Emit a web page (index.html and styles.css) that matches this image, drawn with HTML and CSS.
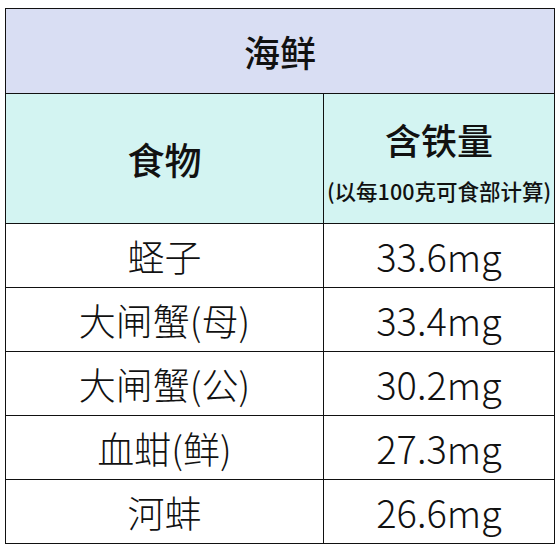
FILE: index.html
```html
<!DOCTYPE html>
<html lang="zh-CN">
<head>
<meta charset="utf-8">
<title>海鲜 含铁量</title>
<link rel="stylesheet" href="styles.css">
</head>
<body>
<table class="iron">
  <colgroup>
    <col class="c-food">
    <col class="c-iron">
  </colgroup>
  <thead>
    <tr class="title-row"><th colspan="2">海鲜</th></tr>
    <tr class="head-row">
      <th class="col-food">食物</th>
      <th class="col-iron"><div class="head-main">含铁量</div><div class="head-sub">(以每100克可食部计算)</div></th>
    </tr>
  </thead>
  <tbody>
    <tr><td>蛏子</td><td class="num">33.6mg</td></tr>
    <tr><td>大闸蟹(母)</td><td class="num">33.4mg</td></tr>
    <tr><td>大闸蟹(公)</td><td class="num">30.2mg</td></tr>
    <tr><td>血蚶(鲜)</td><td class="num">27.3mg</td></tr>
    <tr><td>河蚌</td><td class="num">26.6mg</td></tr>
  </tbody>
</table>
</body>
</html>
```
FILE: styles.css
```css
html, body {
  margin: 0;
  padding: 0;
  background: #ffffff;
}
body {
  padding: 8px 0 0 5px;
  font-family: "Noto Sans CJK SC", "Noto Sans", sans-serif;
  color: #111;
}
.iron {
  border-collapse: collapse;
  width: 549px;
  table-layout: fixed;
}
.c-food { width: 318px; }
.c-iron { width: 231px; }
.iron th, .iron td {
  border: 1.5px solid #111;
  text-align: center;
  vertical-align: middle;
  padding: 0;
}
.title-row th {
  height: 84px;
  background: #d9def3;
  font-size: 36px;
  font-weight: 500;
}
.head-row th {
  height: 129px;
  background: #d3f4f2;
  font-weight: 500;
}
.col-food {
  font-size: 37px;
}
.head-main {
  font-size: 36px;
  line-height: 44px;
  padding-top: 6px;
  margin-bottom: 14px;
}
.head-sub {
  font-size: 21.5px;
  line-height: 32px;
  white-space: nowrap;
}
.iron td {
  height: 63px;
  font-size: 37px;
  line-height: 44px;
  font-weight: 300;
}
.iron td.num {
  font-size: 38px;
}
```
